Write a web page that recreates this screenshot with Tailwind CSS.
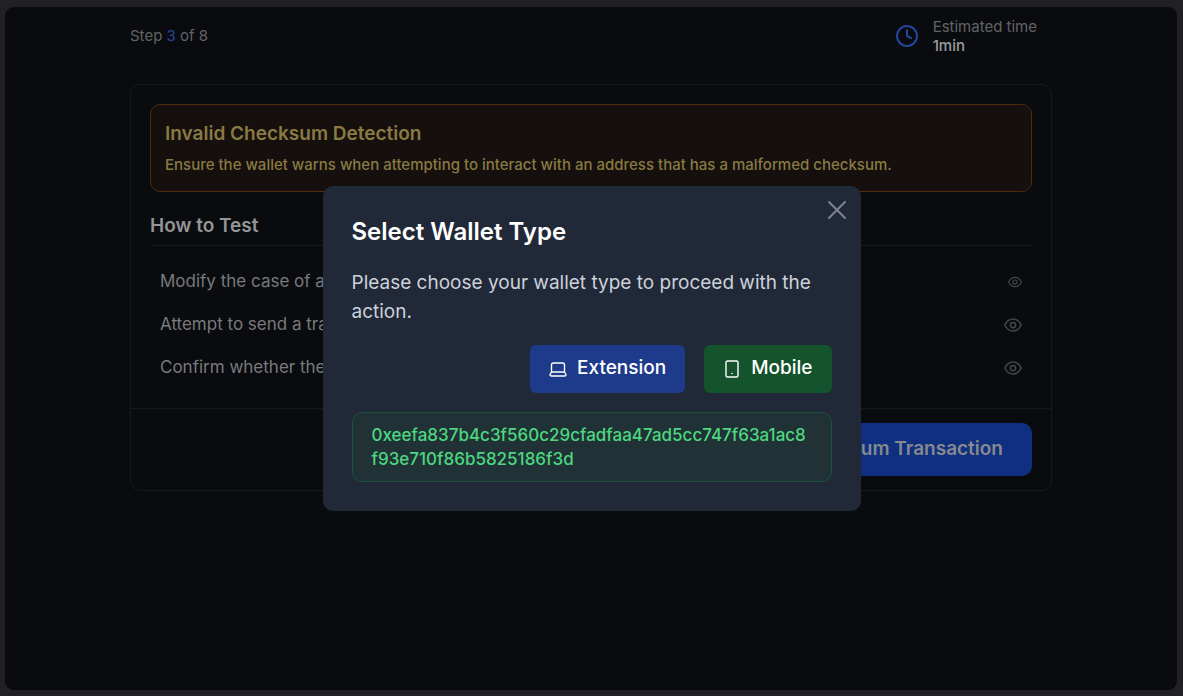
<!DOCTYPE html>
<html lang="en">
<head>
    <meta charset="UTF-8">
    <meta name="viewport" content="width=device-width, initial-scale=1.0">
    <title>Invalid Checksum Detection</title>
    <script src="https://cdn.jsdelivr.net/npm/@tailwindcss/browser@4"></script>
</head>
<body class="bg-[#212025] font-[Inter,sans-serif]">
<div class="min-h-screen flex flex-col pl-[5px] pr-[6px] pt-[7px] pb-[6px]">
    <main class="grow rounded-[9px] bg-[#0a0b0f]">
        <div class="max-w-[922px] mx-auto">
            <header class="flex items-center justify-between h-[58px] pr-[15px]">
                <p class="text-[15px] text-[#626366]">Step <span class="text-[#2347a0]">3</span> of 8</p>
                <div class="flex items-center gap-[14px]">
                    <svg class="size-6" viewBox="0 0 24 24" fill="none" stroke="#24469c" stroke-width="2" stroke-linecap="round" stroke-linejoin="round">
                        <circle cx="12" cy="12" r="10"/>
                        <path d="M12 6v6l4 2"/>
                    </svg>
                    <div class="text-[15px] leading-[19px]">
                        <p class="text-[#626366]">Estimated time</p>
                        <p class="text-[#9c9d9f] font-medium">1min</p>
                    </div>
                </div>
            </header>

            <section class="mt-[19px] rounded-[10px] border border-[#17181c]">
                <div class="p-[19px]">
                    <div class="rounded-[10px] border border-[#4e2a0f] bg-[#150f0d] px-[14px] py-[14px]">
                        <h1 class="text-[19px] leading-[29px] font-semibold text-[#8a7a42]">Invalid Checksum Detection</h1>
                        <p class="mt-[5px] text-[15px] leading-6 font-medium text-[#8a7a42]">Ensure the wallet warns when attempting to interact with an address that has a malformed checksum.</p>
                    </div>
                    <h2 class="mt-[19px] pb-[5px] border-b border-[#17181c] text-[19px] leading-[29px] font-semibold text-[#949597]">How to Test</h2>
                    <ul class="mt-[14px] px-[10px] text-[17px] text-[#797a7d]">
                        <li class="flex items-center justify-between h-[43px]">
                            <span>Modify the case of a valid address</span>
                            <svg class="w-[14px] h-[14px] mr-0 size-[18px]" viewBox="0 0 24 24" fill="none" stroke="#44454a" stroke-width="2"><path d="M1 12C4 6 8 4 12 4s8 2 11 8c-3 6-7 8-11 8S4 18 1 12z"/><circle cx="12" cy="12" r="3.5"/></svg>
                        </li>
                        <li class="flex items-center justify-between h-[43px]">
                            <span>Attempt to send a transaction</span>
                            <svg class="size-[18px]" viewBox="0 0 24 24" fill="none" stroke="#44454a" stroke-width="2"><path d="M1 12C4 6 8 4 12 4s8 2 11 8c-3 6-7 8-11 8S4 18 1 12z"/><circle cx="12" cy="12" r="3.5"/></svg>
                        </li>
                        <li class="flex items-center justify-between h-[43px]">
                            <span>Confirm whether the wallet warns</span>
                            <svg class="size-[18px]" viewBox="0 0 24 24" fill="none" stroke="#44454a" stroke-width="2"><path d="M1 12C4 6 8 4 12 4s8 2 11 8c-3 6-7 8-11 8S4 18 1 12z"/><circle cx="12" cy="12" r="3.5"/></svg>
                        </li>
                    </ul>
                </div>
                <div class="flex justify-end border-t border-[#17181c] px-[19px] py-[14px]">
                    <button type="button" class="h-[53px] px-[29px] rounded-[10px] bg-[#0f2f80] text-[19px] font-semibold text-[#87898e]">Send Invalid Checksum Transaction</button>
                </div>
            </section>
        </div>
    </main>
</div>

<!-- Wallet type dialog -->
<div class="fixed inset-0 flex items-center justify-center">
    <div role="dialog" aria-modal="true" aria-labelledby="wallet-title" class="relative w-full max-w-[538px] rounded-[10px] bg-[#212939] p-[29px]">
        <button type="button" aria-label="Close" class="absolute top-3 right-3 text-[#7d838e]">
            <svg class="size-6" viewBox="0 0 24 24" fill="none" stroke="currentColor" stroke-width="2" stroke-linecap="round"><path d="M4 4l16 16M20 4L4 20"/></svg>
        </button>
        <h2 id="wallet-title" class="text-[24px] leading-[34px] font-semibold text-white">Select Wallet Type</h2>
        <p class="mt-[19px] text-[19px] leading-[29px] text-[#ccd1da]">Please choose your wallet type to proceed with the action.</p>
        <div class="mt-[19px] flex justify-end gap-[19px] text-[19px] font-medium text-white">
            <button type="button" class="flex items-center gap-[10px] h-12 px-[19px] rounded-md bg-[#1e3a8a]">
                <svg class="size-[18px]" viewBox="0 0 18 18" fill="none" stroke="currentColor" stroke-width="1.4" stroke-linejoin="round"><path d="M2.5 12V5Q2.5 3 4.500 3H13.500Q15.500 3 15.500 5V12M2.500 12H15.500L17 14.500Q17 16 15.500 16H2.500Q1 16 1 14.500Z"/></svg>
                Extension
            </button>
            <button type="button" class="flex items-center gap-[10px] h-12 px-[19px] rounded-md bg-[#14532b]">
                <svg class="size-[18px]" viewBox="0 0 18 18" fill="none" stroke="currentColor" stroke-width="1.4"><rect x="3" y="1" width="12" height="16" rx="1.500"/><circle cx="9" cy="13.500" r=".8" fill="currentColor" stroke="none"/></svg>
                Mobile
            </button>
        </div>
        <p class="mt-[19px] rounded-[10px] border border-[#1a5337] bg-[#203236] px-[19px] py-[10px] text-[17px] leading-6 font-medium text-[#4cd780] break-all">0xeefa837b4c3f560c29cfadfaa47ad5cc747f63a1ac8f93e710f86b5825186f3d</p>
    </div>
</div>
</body>
</html>
